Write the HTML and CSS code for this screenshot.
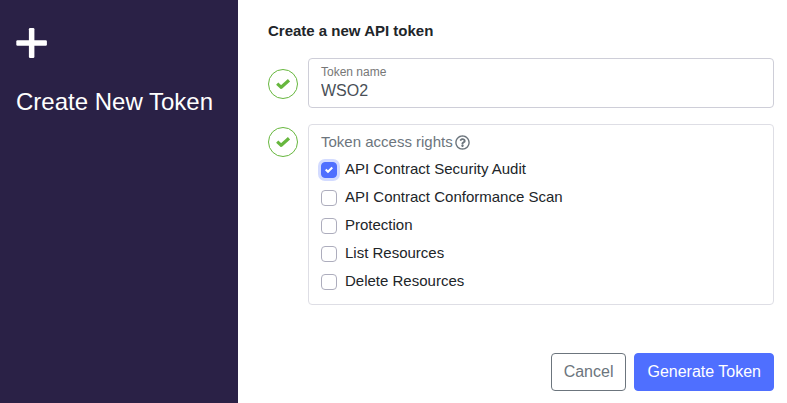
FILE: index.html
```html
<!DOCTYPE html>
<html lang="en">
<head>
<meta charset="utf-8">
<meta name="viewport" content="width=device-width, initial-scale=1">
<title>Create New Token</title>
<link rel="stylesheet" href="styles.css">
</head>
<body>
<div class="dialog">
  <aside class="sidebar">
    <svg class="plus" viewBox="0 0 32 32" aria-hidden="true"><rect x="0.3" y="13.2" width="30.6" height="5.5" rx="1.2"/><rect x="12.9" y="1" width="5.5" height="30" rx="1.2"/></svg>
    <h1 class="sidebar-title">Create New Token</h1>
  </aside>
  <form class="content">
    <h2 class="form-title">Create a new API token</h2>
    <div class="step step-name">
      <span class="status"><svg viewBox="0 0 16 12" aria-hidden="true"><path d="M2.2 5.6L6.2 9.3L14 2.2"/></svg></span>
      <div class="field">
        <label class="field-label" for="token-name">Token name</label>
        <input class="field-input" id="token-name" type="text" value="WSO2">
      </div>
    </div>
    <div class="step step-rights">
      <span class="status"><svg viewBox="0 0 16 12" aria-hidden="true"><path d="M2.2 5.6L6.2 9.3L14 2.2"/></svg></span>
      <div class="rights" role="group" aria-labelledby="rights-title">
        <div class="rights-title"><span id="rights-title">Token access rights</span><svg class="help" viewBox="0 0 512 512" aria-hidden="true"><path d="M256 8C119.043 8 8 119.083 8 256c0 136.997 111.043 248 248 248s248-111.003 248-248C504 119.083 392.957 8 256 8zm0 448c-110.532 0-200-89.431-200-200 0-110.495 89.472-200 200-200 110.491 0 200 89.471 200 200 0 110.53-89.431 200-200 200zm107.244-255.2c0 67.052-72.421 68.084-72.421 92.863V300c0 6.627-5.373 12-12 12h-45.647c-6.627 0-12-5.373-12-12v-8.659c0-35.745 27.1-50.034 47.579-61.516 17.561-9.845 28.324-16.541 28.324-29.579 0-17.246-21.999-28.693-39.784-28.693-23.189 0-33.894 10.977-48.942 29.969-4.057 5.12-11.46 6.071-16.666 2.124l-27.824-21.098c-5.107-3.872-6.251-11.066-2.644-16.363C184.846 131.491 214.94 112 261.794 112c49.071 0 101.45 38.304 101.45 88.8zM298 368c0 23.159-18.841 42-42 42s-42-18.841-42-42 18.841-42 42-42 42 18.841 42 42z"/></svg></div>
        <label class="option"><input class="check check-active" type="checkbox" checked>API Contract Security Audit</label>
        <label class="option"><input class="check" type="checkbox">API Contract Conformance Scan</label>
        <label class="option"><input class="check" type="checkbox">Protection</label>
        <label class="option"><input class="check" type="checkbox">List Resources</label>
        <label class="option"><input class="check" type="checkbox">Delete Resources</label>
      </div>
    </div>
    <div class="actions">
      <button class="button button-outline" type="button">Cancel</button>
      <button class="button button-primary" type="button">Generate Token</button>
    </div>
  </form>
</div>
</body>
</html>
```
FILE: styles.css
```css
* {
  box-sizing: border-box;
}

body {
  margin: 0;
  background: #fff;
  color: #212529;
  font-family: "Liberation Sans", Arial, sans-serif;
  font-size: 15px;
  line-height: 20px;
}

.dialog {
  display: flex;
  min-height: 100vh;
}

.sidebar {
  flex: 0 0 238px;
  padding: 27px 16px;
  background: #2a2146;
  color: #fff;
}

.plus {
  display: block;
  width: 32px;
  height: 32px;
  fill: currentColor;
}

.sidebar-title {
  margin: 28px 0 0;
  font-size: 24px;
  font-weight: 400;
  line-height: 30px;
  white-space: nowrap;
}

.content {
  display: flex;
  flex: 1;
  flex-direction: column;
  min-width: 0;
  padding: 21px 13px 12px 30px;
}

.form-title {
  margin: 0 0 17px;
  font-size: 15px;
  line-height: 20px;
}

.step {
  display: flex;
  align-items: flex-start;
  gap: 10px;
}

.step-rights {
  margin-top: 16px;
}

.status {
  display: flex;
  flex: 0 0 30px;
  align-items: center;
  justify-content: center;
  height: 30px;
  border: 1px solid #67b73e;
  border-radius: 50%;
}

.step-name .status {
  margin-top: 11px;
}

.step-rights .status {
  margin-top: 3px;
}

.status svg {
  width: 16px;
  height: 12px;
  fill: none;
  stroke: #67b73e;
  stroke-width: 3.2;
  stroke-linejoin: round;
}

.field,
.rights {
  flex: 1;
  min-width: 0;
  padding: 0 12px;
  border: 1px solid #ceced8;
  border-radius: 4px;
}

.field {
  display: flex;
  flex-direction: column;
  padding-top: 5px;
  padding-bottom: 5px;
}

.field-label {
  color: #777;
  font-size: 12px;
  line-height: 16px;
}

.field-input {
  width: 100%;
  height: 22px;
  padding: 0;
  border: 0;
  outline: 0;
  background: transparent;
  color: #495057;
  font: inherit;
  font-size: 16px;
}

.rights {
  padding-top: 7px;
  padding-bottom: 9px;
  border-color: #dedee5;
}

.rights-title {
  display: flex;
  align-items: center;
  gap: 2px;
  margin-bottom: 3px;
  color: #6c757d;
}

.help {
  width: 15px;
  height: 15px;
  fill: currentColor;
}

.option {
  display: flex;
  align-items: center;
  gap: 8px;
  height: 28px;
}

.check {
  flex: none;
  width: 16px;
  height: 16px;
  margin: 2px 0 0;
  border: 1px solid #adadbd;
  border-radius: 4px;
  appearance: none;
  background: #fff;
}

.check:checked {
  border-color: #4f6fff;
  background: #4f6fff url("data:image/svg+xml,%3Csvg xmlns='http://www.w3.org/2000/svg' viewBox='0 0 8 8'%3E%3Cpath fill='%23fff' d='M6.564.75l-3.59 3.612-1.538-1.55L0 4.26 2.974 7.25 8 2.193z'/%3E%3C/svg%3E") center / 8px 8px no-repeat;
}

.check-active {
  box-shadow: 0 0 0 3px #d3dbff;
}

.actions {
  display: flex;
  justify-content: flex-end;
  gap: 8px;
  margin-top: auto;
  padding-top: 24px;
}

.button {
  height: 38px;
  padding: 0 12px;
  border: 1px solid #4f6fff;
  border-radius: 4px;
  font: inherit;
  font-size: 16px;
}

.button-outline {
  border-color: #6c757d;
  background: #fff;
  color: #6c757d;
}

.button-primary {
  background: #4f6fff;
  color: #fff;
}
```
